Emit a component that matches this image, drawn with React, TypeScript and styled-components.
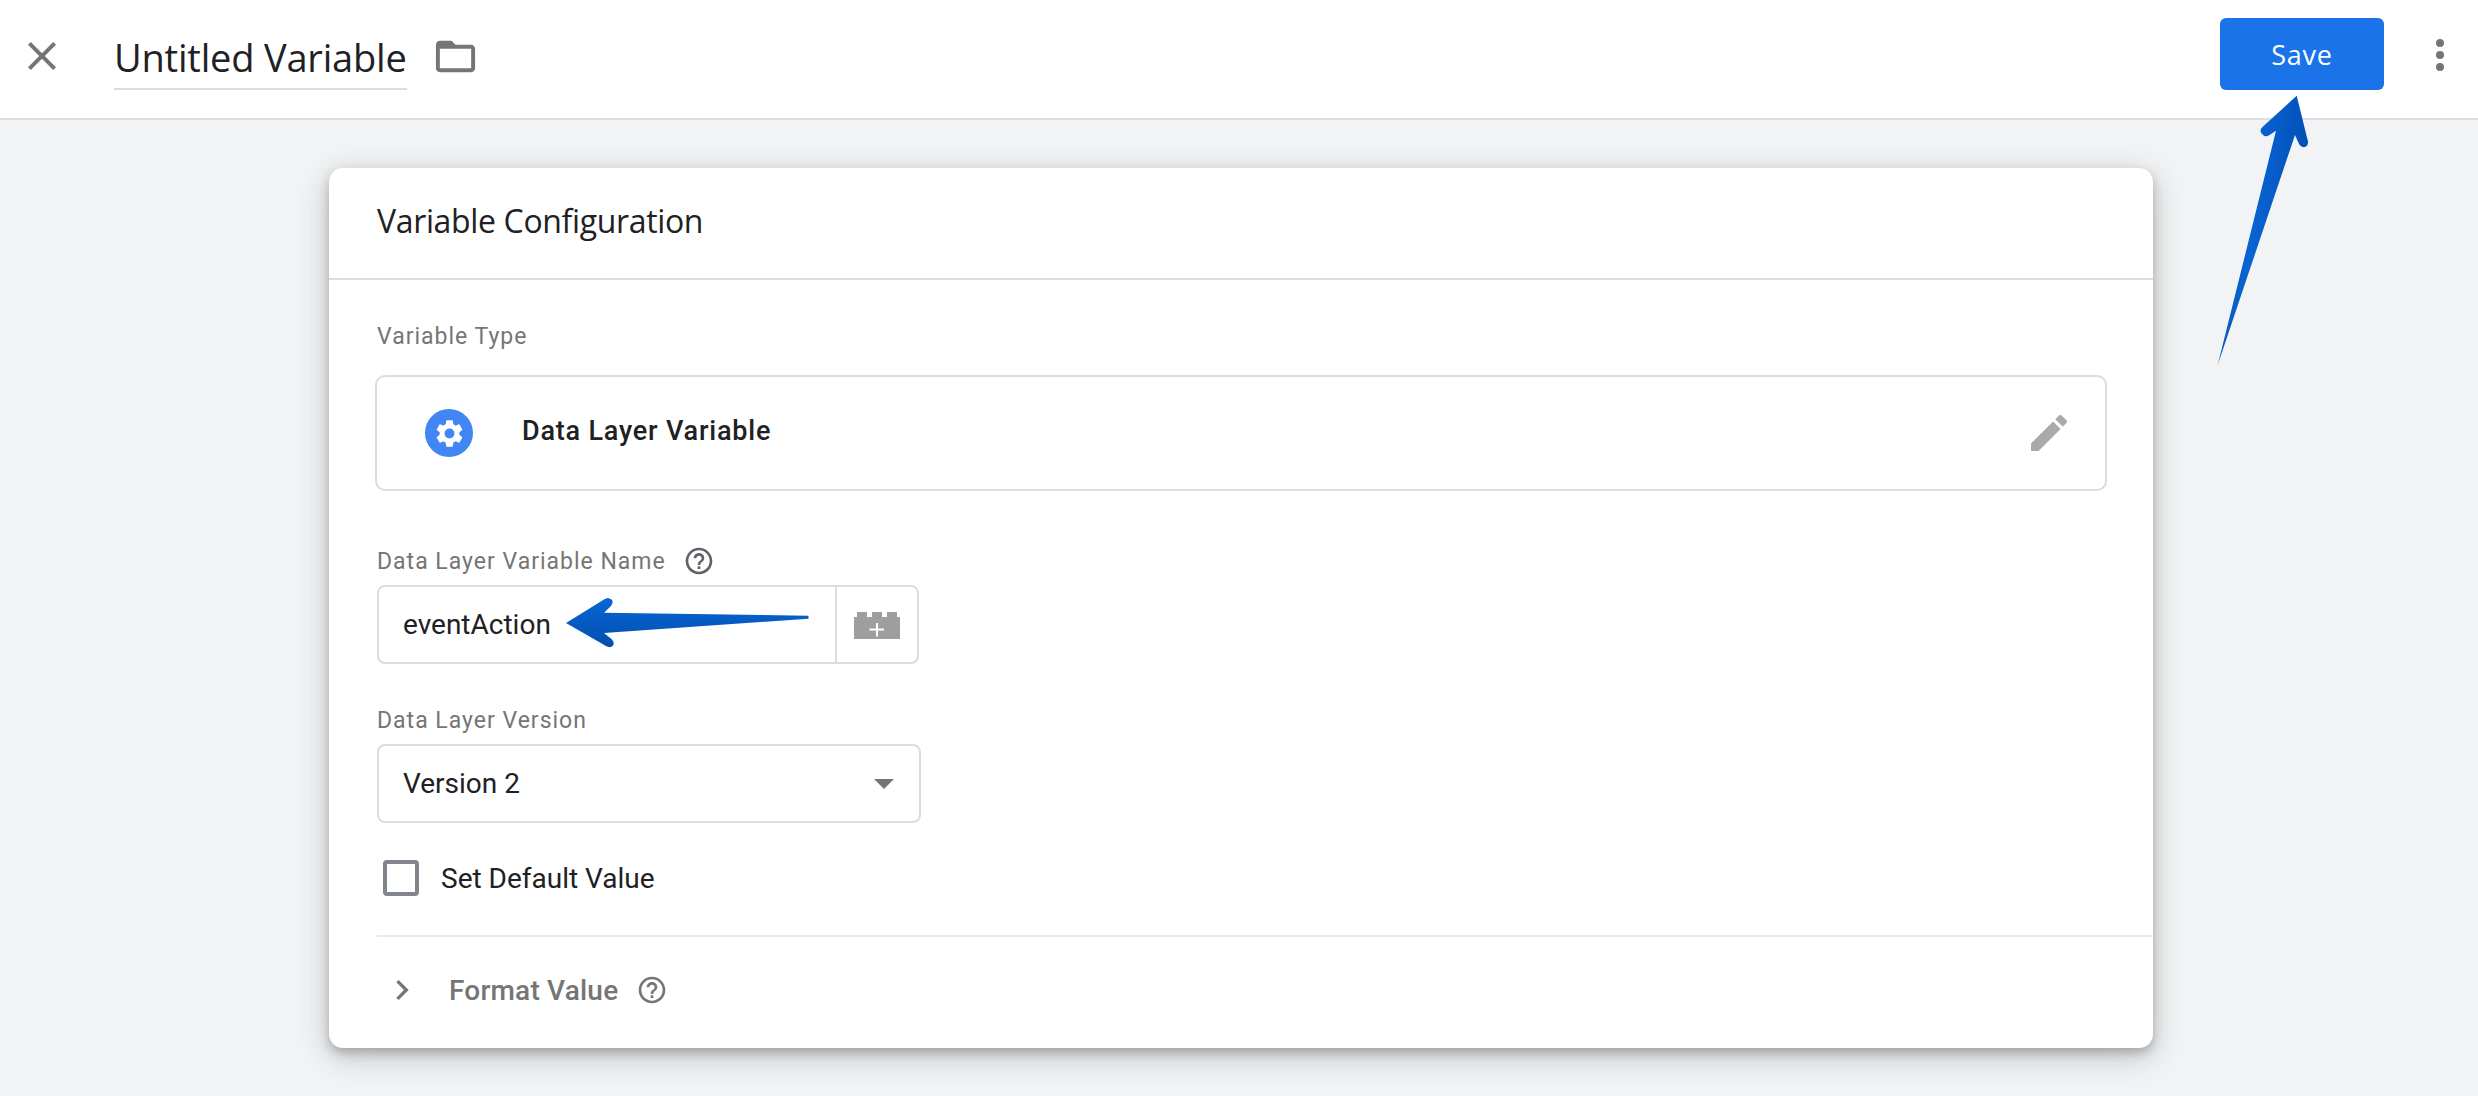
import React from "react";
import styled, { createGlobalStyle } from "styled-components";

const Global = createGlobalStyle`
  html, body { margin: 0; padding: 0; background: #f1f3f4; }
  body { font-family: Roboto, "Liberation Sans", sans-serif; color: #202124; }
`;
const Page = styled.div`
  position: relative; width: 2478px; height: 1096px; overflow: hidden; background: #f1f3f4;
`;
const TopBar = styled.header`
  box-sizing: border-box; height: 120px; background: #fff; border-bottom: 2px solid #dadce0;
  display: flex; align-items: center; padding: 0 14px 6px 18px;
`;
const Icon = styled.svg<{ $size: number; $color: string }>`
  width: ${p => p.$size}px; height: ${p => p.$size}px; fill: ${p => p.$color}; flex: none; display: block;
`;
const TitleWrap = styled.div`
  margin-left: 48px; height: 68px; box-sizing: border-box; border-bottom: 2px solid #dadce0;
  display: flex; align-items: center; padding-top: 3px;
`;
const TitleText = styled.span`
  font-family: "Open Sans", sans-serif; font-size: 38px; letter-spacing: -0.2px; color: #202124; line-height: 44px;
`;
const FolderSlot = styled.div` margin-left: 25px; `;
const Spacer = styled.div` flex: 1; `;
const SaveButton = styled.button`
  width: 164px; height: 72px; border: 0; border-radius: 6px; background: #1a73e8; color: #fff;
  font-family: "Open Sans", sans-serif; font-weight: 500; font-size: 27px; letter-spacing: 0.7px; padding: 0; margin-top: -4px;
`;
const MoreButton = styled.div`
  margin: -2px 0 0 32px; width: 48px; display: flex; flex-direction: column; align-items: center; gap: 4px;
`;
const Dot = styled.i` width: 8px; height: 8px; border-radius: 50%; background: #757575; display: block; `;
const Card = styled.section`
  box-sizing: border-box; width: 1824px; height: 880px; margin: 48px 0 0 329px; background: #fff; border-radius: 14px;
  box-shadow: 0 5px 10px rgba(60,64,67,.28), 0 8px 30px rgba(60,64,67,.28);
`;
const CardHead = styled.div`
  box-sizing: border-box; height: 112px; border-bottom: 2px solid #dadce0; padding: 0 48px 6px;
  display: flex; align-items: center;
  font-family: "Open Sans", sans-serif; font-size: 32px; letter-spacing: -0.35px; color: #202124;
`;
const CardBody = styled.div` padding: 41px 46px 0 48px; `;
const Label = styled.div`
  display: flex; align-items: center; gap: 17px; height: 30px; font-size: 23px; letter-spacing: 1px; color: #757575;
`;
const TypeBox = styled.div`
  box-sizing: border-box; height: 116px; margin: 24px 0 0 -2px; border: 2px solid #dadce0; border-radius: 10px;
  display: flex; align-items: center; padding: 0 32px 0 48px;
`;
const TypeBadge = styled.div`
  width: 48px; height: 48px; border-radius: 50%; background: #4285f4; display: flex; align-items: center; justify-content: center;
`;
const TypeName = styled.div`
  margin-left: 49px; font-size: 27px; font-weight: 500; letter-spacing: 0.8px; color: #202124; margin-top: -5px;
`;
const PencilSlot = styled.div` margin-left: auto; `;
const InputLabel = styled(Label)` margin-top: 55px; `;
const InputGroup = styled.div`
  box-sizing: border-box; width: 542px; height: 79px; margin-top: 9px; border: 2px solid #dadce0; border-radius: 8px; display: flex;
`;
const InputValue = styled.div`
  flex: 1; display: flex; align-items: center; padding-left: 24px; font-size: 28px; color: #202124;
`;
const PickerButton = styled.div`
  width: 80px; border-left: 2px solid #dadce0; display: flex; align-items: center; justify-content: center;
`;
const VersionLabel = styled(Label)` margin-top: 41px; `;
const Select = styled.div`
  box-sizing: border-box; width: 544px; height: 79px; margin-top: 9px; border: 2px solid #dadce0; border-radius: 8px;
  display: flex; align-items: center; justify-content: space-between; padding: 0 25px 0 24px; font-size: 28px; color: #202124;
`;
const Caret = styled.i`
  width: 0; height: 0; border-left: 10px solid transparent; border-right: 10px solid transparent; border-top: 10px solid #757575; display: block;
`;
const CheckRow = styled.div`
  display: flex; align-items: center; height: 36px; margin: 37px 0 0 6px; gap: 22px; font-size: 28px; color: #202124;
`;
const CheckBox = styled.span`
  box-sizing: border-box; width: 36px; height: 36px; border: 4px solid #80868b; border-radius: 4px; display: block;
`;
const Divider = styled.div` height: 2px; background: #ebebeb; margin: 39px 0 0 48px; `;
const FormatRow = styled.div`
  display: flex; align-items: center; height: 40px; margin: 33px 0 0 56px;
  font-size: 28px; font-weight: 500; letter-spacing: 0.2px; color: #757575;
`;
const Chevron = styled.div` margin-left: -3px; width: 67px; `;
const FormatHelp = styled.div` margin-left: 18px; `;
const Overlay = styled.svg` position: absolute; left: 0; top: 0; width: 2478px; height: 1096px; pointer-events: none; `;

const help = "M11 18h2v-2h-2v2zm1-16C6.48 2 2 6.48 2 12s4.48 10 10 10 10-4.48 10-10S17.52 2 12 2zm0 18c-4.41 0-8-3.59-8-8s3.59-8 8-8 8 3.59 8 8-3.59 8-8 8zm0-14c-2.21 0-4 1.79-4 4h2c0-1.1.9-2 2-2s2 .9 2 2c0 2-3 1.75-3 5h2c0-2.25 3-2.5 3-5 0-2.21-1.79-4-4-4z";

export default function App() {
  return (
    <Page>
      <Global />
      <TopBar>
        <Icon $size={48} $color="#757575" viewBox="0 0 24 24">
          <path d="M19 6.41L17.59 5 12 10.59 6.41 5 5 6.41 10.59 12 5 17.59 6.41 19 12 13.41 17.59 19 19 17.59 13.41 12z" />
        </Icon>
        <TitleWrap><TitleText>Untitled Variable</TitleText></TitleWrap>
        <FolderSlot>
          <Icon $size={47} $color="#757575" viewBox="0 0 24 24">
            <path d="M20 6h-8l-2-2H4c-1.1 0-1.99.9-1.99 2L2 18c0 1.1.9 2 2 2h16c1.1 0 2-.9 2-2V8c0-1.1-.9-2-2-2zm0 12H4V8h16v10z" />
          </Icon>
        </FolderSlot>
        <Spacer />
        <SaveButton>Save</SaveButton>
        <MoreButton><Dot /><Dot /><Dot /></MoreButton>
      </TopBar>
      <Card>
        <CardHead>Variable Configuration</CardHead>
        <CardBody>
          <Label>Variable Type</Label>
          <TypeBox>
            <TypeBadge>
              <Icon $size={33} $color="#fff" viewBox="0 0 24 24">
                <path d="M19.14 12.94c.04-.3.06-.61.06-.94 0-.32-.02-.64-.07-.94l2.03-1.58c.18-.14.23-.41.12-.61l-1.92-3.32c-.12-.22-.37-.29-.59-.22l-2.39.96c-.5-.38-1.03-.7-1.62-.94l-.36-2.54c-.04-.24-.24-.41-.48-.41h-3.84c-.24 0-.43.17-.47.41l-.36 2.54c-.59.24-1.13.57-1.62.94l-2.39-.96c-.22-.08-.47 0-.59.22L2.74 8.87c-.12.21-.08.47.12.61l2.03 1.58c-.05.3-.09.63-.09.94s.02.64.07.94l-2.03 1.58c-.18.14-.23.41-.12.61l1.92 3.32c.12.22.37.29.59.22l2.39-.96c.5.38 1.03.7 1.62.94l.36 2.54c.05.24.24.41.48.41h3.84c.24 0 .44-.17.47-.41l.36-2.54c.59-.24 1.13-.56 1.62-.94l2.39.96c.22.08.47 0 .59-.22l1.92-3.32c.12-.22.07-.47-.12-.61l-2.01-1.58zM12 15.6c-1.98 0-3.6-1.62-3.6-3.6s1.62-3.6 3.6-3.6 3.6 1.62 3.6 3.6-1.62 3.6-3.6 3.6z" />
              </Icon>
            </TypeBadge>
            <TypeName>Data Layer Variable</TypeName>
            <PencilSlot>
              <Icon $size={48} $color="#aaaaaa" viewBox="0 0 24 24">
                <path d="M3 17.25V21h3.75L17.81 9.94l-3.75-3.75L3 17.25zM20.71 7.04c.39-.39.39-1.02 0-1.41l-2.34-2.34c-.39-.39-1.02-.39-1.41 0l-1.83 1.83 3.75 3.75 1.83-1.83z" />
              </Icon>
            </PencilSlot>
          </TypeBox>
          <InputLabel>
            Data Layer Variable Name
            <Icon $size={32} $color="#5f6368" viewBox="0 0 24 24"><path d={help} /></Icon>
          </InputLabel>
          <InputGroup>
            <InputValue>eventAction</InputValue>
            <PickerButton>
              <Icon $size={46} $color="#9e9e9e" viewBox="0 0 46 46">
                <path d="M0 15H3V10H13V15H18V10H28V15H33V10H43V15H46V37H0z" />
                <path d="M22 21h2v5.5h6v2h-6v6h-2v-6h-6.5v-2H22z" fill="#fff" />
              </Icon>
            </PickerButton>
          </InputGroup>
          <VersionLabel>Data Layer Version</VersionLabel>
          <Select>Version 2<Caret /></Select>
          <CheckRow><CheckBox />Set Default Value</CheckRow>
        </CardBody>
        <Divider />
        <FormatRow>
          <Chevron>
            <Icon $size={40} $color="#757575" viewBox="0 0 24 24"><path d="M8.59 16.59L13.17 12 8.59 7.41 10 6l6 6-6 6z" /></Icon>
          </Chevron>
          Format Value
          <FormatHelp>
            <Icon $size={32} $color="#757575" viewBox="0 0 24 24"><path d={help} /></Icon>
          </FormatHelp>
        </FormatRow>
      </Card>
      <Overlay viewBox="0 0 2478 1096">
        <defs>
          <linearGradient id="up" x1="0" y1="0" x2="1" y2="0.2">
            <stop offset="0" stopColor="#0f4fa8" />
            <stop offset="0.45" stopColor="#0a63d2" />
            <stop offset="1" stopColor="#0050b8" />
          </linearGradient>
          <linearGradient id="left" x1="0" y1="0" x2="0" y2="1">
            <stop offset="0" stopColor="#0a66d4" />
            <stop offset="1" stopColor="#004fb0" />
          </linearGradient>
        </defs>
        <path fill="url(#up)" d="M2296.7 95.7L2263 126.5Q2259 130 2261.5 133.5Q2265 138 2269.5 135L2276 130.7L2217.7 365L2295 135L2299 144Q2302 149 2306 146.5Q2309 144.5 2307.6 140Z" />
        <path fill="url(#left)" d="M566 623L604 599.5Q608 596.5 611.5 599.5Q614 602 611 606L604 612.7L808.5 615.7V618.7L604 633L611.5 639Q615 642.5 613 645.5Q610 648.5 606 646Z" />
      </Overlay>
    </Page>
  );
}
